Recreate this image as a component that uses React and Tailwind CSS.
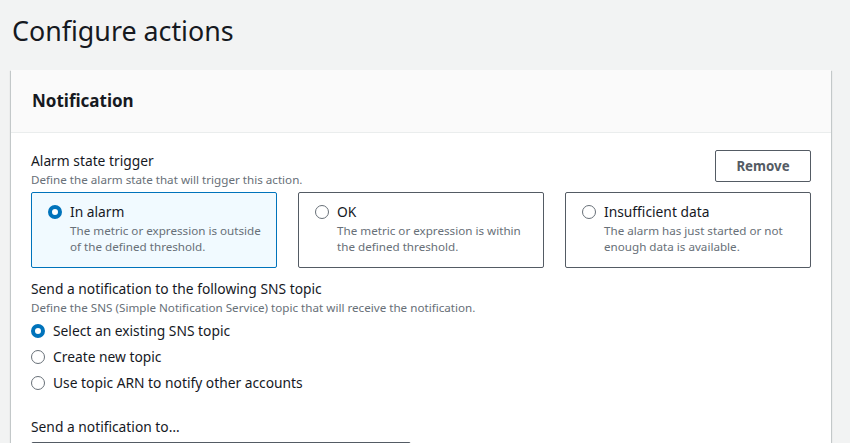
import { useState } from "react";

const triggers = [
  {
    id: "alarm",
    label: "In alarm",
    desc: ["The metric or expression is outside", "of the defined threshold."],
  },
  {
    id: "ok",
    label: "OK",
    desc: ["The metric or expression is within", "the defined threshold."],
  },
  {
    id: "insufficient",
    label: "Insufficient data",
    desc: ["The alarm has just started or not", "enough data is available."],
  },
];

const topicOptions = [
  { id: "existing", label: "Select an existing SNS topic" },
  { id: "new", label: "Create new topic" },
  { id: "arn", label: "Use topic ARN to notify other accounts" },
];

function Radio({ checked }) {
  return checked ? (
    <span className="w-[14px] h-[14px] shrink-0 rounded-full border-[4px] border-[#0073bb] bg-white" />
  ) : (
    <span className="w-[14px] h-[14px] shrink-0 rounded-full border-[1.5px] border-[#687078] bg-white" />
  );
}

export default function App() {
  const [trigger, setTrigger] = useState("alarm");
  const [topic, setTopic] = useState("existing");

  return (
    <div
      className="w-[850px] h-[443px] overflow-hidden bg-[#f2f3f3] text-[#16191f]"
      style={{ fontFamily: '"Noto Sans", "Open Sans", Arial, sans-serif' }}
    >
      <h1 className="pl-[12px] pt-[11px] h-[70px] text-[26.8px] leading-[40px] font-normal">
        Configure actions
      </h1>

      <div className="ml-[11px] w-[820px] bg-white shadow-[0_1px_1px_0_rgba(0,28,36,0.3),1px_1px_1px_0_rgba(0,28,36,0.15),-1px_1px_1px_0_rgba(0,28,36,0.15)]">
        {/* header */}
        <div className="h-[63px] bg-[#fafafa] border-b border-[#eaeded] flex items-center pl-[21px]">
          <h2 className="text-[17px] font-bold leading-[22px]">Notification</h2>
        </div>

        <div className="px-[20px] pt-[17px] pb-6">
          <div className="flex justify-between">
            <div>
              <p className="text-[13.8px] leading-[22px]">Alarm state trigger</p>
              <p className="text-[11.65px] leading-[16px] text-[#687078]">
                Define the alarm state that will trigger this action.
              </p>
            </div>
            <button className="w-[96px] h-[32px] pt-px border border-[#545b64] rounded-[2px] text-[13.3px] font-bold text-[#545b64]">
              Remove
            </button>
          </div>

          <div className="mt-[4px] grid grid-cols-3 gap-[21px]">
            {triggers.map((t) => {
              const sel = trigger === t.id;
              return (
                <div
                  key={t.id}
                  onClick={() => setTrigger(t.id)}
                  className={
                    sel
                      ? "h-[76px] border border-[#0073bb] bg-[#f1faff] rounded-[2px] px-[16px] pt-[8px] flex gap-[8px]"
                      : "h-[76px] border border-[#545b64] bg-white rounded-[2px] px-[16px] pt-[8px] flex gap-[8px]"
                  }
                >
                  <div className="h-[22px] flex items-center">
                    <Radio checked={sel} />
                  </div>
                  <div>
                    <p className="text-[13.8px] leading-[22px]">{t.label}</p>
                    {t.desc.map((d) => (
                      <p
                        key={d}
                        className="text-[11.65px] leading-[16px] text-[#687078] whitespace-nowrap"
                      >
                        {d}
                      </p>
                    ))}
                  </div>
                </div>
              );
            })}
          </div>

          <p className="mt-[10px] text-[13.8px] leading-[22px]">
            Send a notification to the following SNS topic
          </p>
          <p className="text-[11.65px] leading-[16px] text-[#687078]">
            Define the SNS (Simple Notification Service) topic that will receive the notification.
          </p>

          <div className="mt-[4px] flex flex-col gap-[4px]">
            {topicOptions.map((o) => (
              <div
                key={o.id}
                onClick={() => setTopic(o.id)}
                className="flex items-center gap-[8px] h-[22px]"
              >
                <Radio checked={topic === o.id} />
                <span className="text-[13.8px] leading-[22px]">{o.label}</span>
              </div>
            ))}
          </div>

          <p className="mt-[22px] text-[13.8px] leading-[22px]">Send a notification to…</p>
          <div className="mt-[4px] w-[380px] h-[32px] border border-[#545b64] rounded-[2px]" />
        </div>
      </div>
    </div>
  );
}
